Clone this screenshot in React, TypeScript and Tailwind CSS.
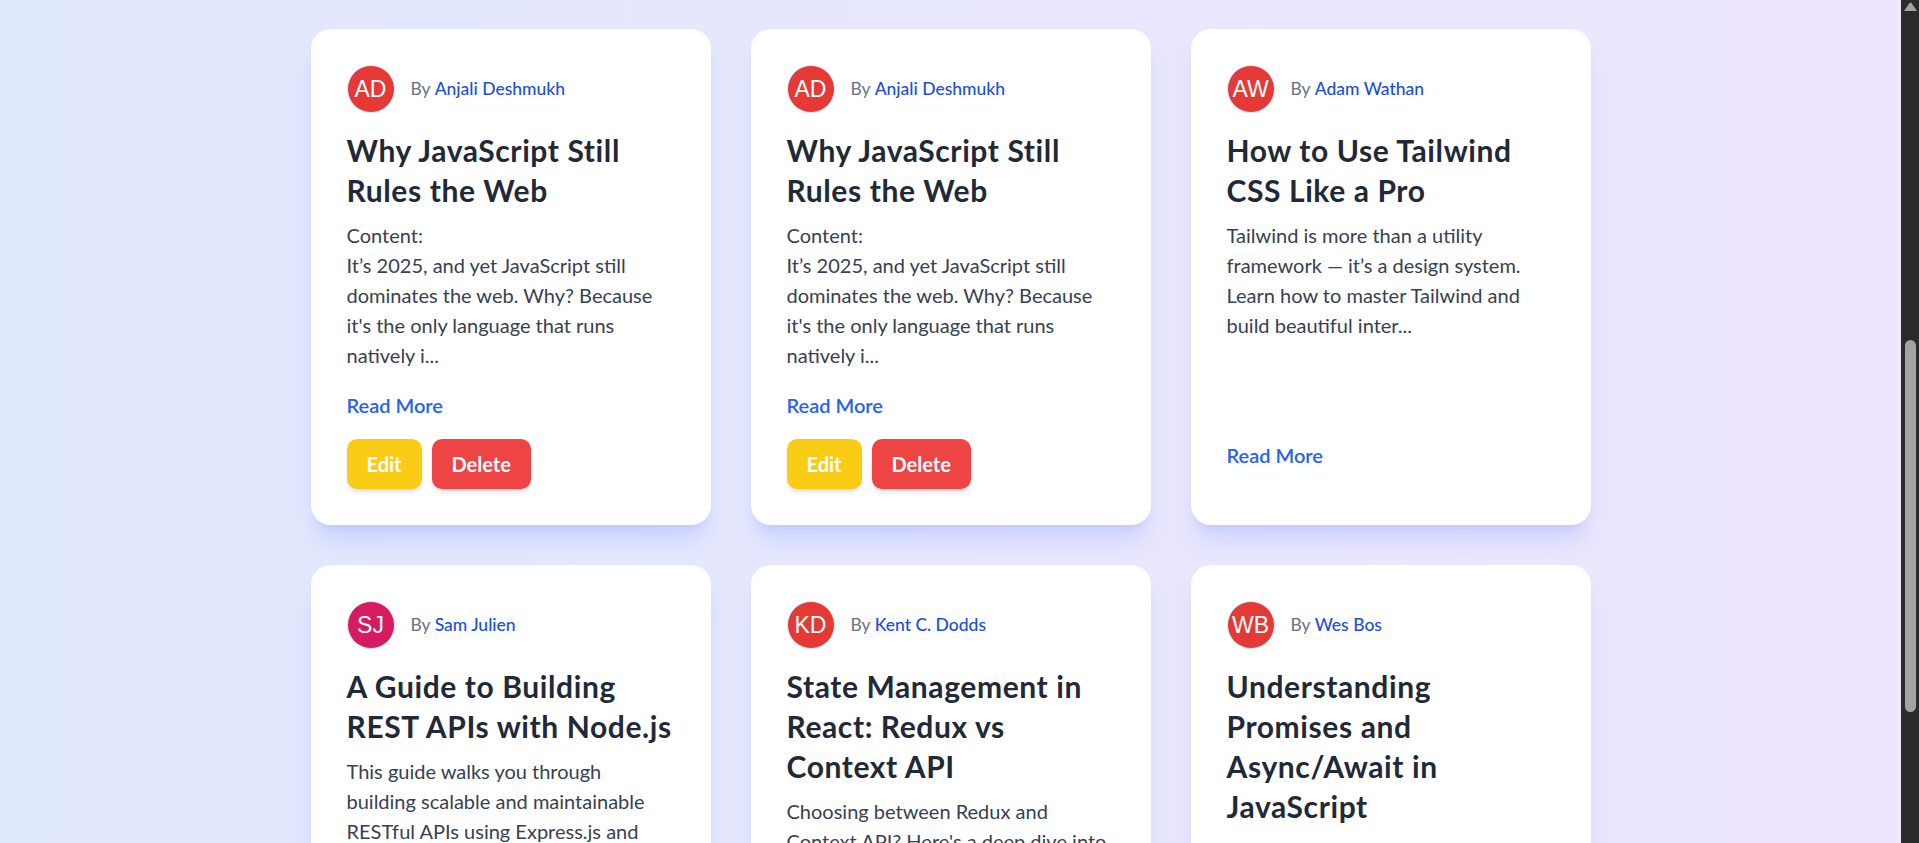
import React from 'react';

interface Post {
  id: number;
  initials: string;
  avatarBg: string;
  author: string;
  title: string;
  excerpt: string;
  mine: boolean;
}

const posts: Post[] = [
  {
    id: 1,
    initials: 'AD',
    avatarBg: 'bg-[#e53935]',
    author: 'Anjali Deshmukh',
    title: 'Why JavaScript Still Rules the Web',
    excerpt:
      "Content:\nIt’s 2025, and yet JavaScript still dominates the web. Why? Because it's the only language that runs natively i...",
    mine: true,
  },
  {
    id: 2,
    initials: 'AD',
    avatarBg: 'bg-[#e53935]',
    author: 'Anjali Deshmukh',
    title: 'Why JavaScript Still Rules the Web',
    excerpt:
      "Content:\nIt’s 2025, and yet JavaScript still dominates the web. Why? Because it's the only language that runs natively i...",
    mine: true,
  },
  {
    id: 3,
    initials: 'AW',
    avatarBg: 'bg-[#e53935]',
    author: 'Adam Wathan',
    title: 'How to Use Tailwind CSS Like a Pro',
    excerpt:
      'Tailwind is more than a utility framework — it’s a design system. Learn how to master Tailwind and build beautiful inter...',
    mine: false,
  },
  {
    id: 4,
    initials: 'SJ',
    avatarBg: 'bg-[#d81b60]',
    author: 'Sam Julien',
    title: 'A Guide to Building REST APIs with Node.js',
    excerpt:
      'This guide walks you through building scalable and maintainable RESTful APIs using Express.js and MongoDB, with best pra...',
    mine: false,
  },
  {
    id: 5,
    initials: 'KD',
    avatarBg: 'bg-[#e53935]',
    author: 'Kent C. Dodds',
    title: 'State Management in React: Redux vs Context API',
    excerpt:
      "Choosing between Redux and Context API? Here's a deep dive into when to use each, their trade-offs, and real-world exa...",
    mine: false,
  },
  {
    id: 6,
    initials: 'WB',
    avatarBg: 'bg-[#e53935]',
    author: 'Wes Bos',
    title: 'Understanding Promises and Async/Await in JavaScript',
    excerpt:
      "Promises and async/await make asynchronous JavaScript easier to read and write. Let's break down how they work under th...",
    mine: false,
  },
];

const BlogCard = ({ post }: { post: Post }) => {
  return (
    <div className="flex flex-col rounded-[20px] bg-white p-9 shadow-xl shadow-indigo-300/40">
      <div className="mb-[17px] flex items-center gap-4">
        <div
          className={`flex h-12 w-12 shrink-0 items-center justify-center rounded-full border border-blue-100 font-['Liberation_Sans',sans-serif] text-[23px] text-white ${post.avatarBg}`}
        >
          {post.initials}
        </div>
        <p className="text-[17.5px] text-[#6b7280]">
          By <span className="font-medium text-[#1d4ed8]">{post.author}</span>
        </p>
      </div>

      <h2 className="mb-[10px] text-[30px] font-bold leading-10 tracking-[0.6px] text-[#1f2937]">{post.title}</h2>
      <p className="whitespace-pre-line text-[20px] leading-[30px] text-[#374151]">{post.excerpt}</p>

      <div className="mt-auto pt-5">
        <a href="#" className="mb-[19px] block text-[20px] font-semibold leading-[30px] text-[#2563eb]">
          Read More
        </a>
        {post.mine && (
          <div className="flex gap-2.5">
            <button className="rounded-[10px] bg-[#facc15] px-5 py-2.5 text-[20px] font-bold leading-[30px] text-white shadow-md">
              Edit
            </button>
            <button className="rounded-[10px] bg-[#ef4444] px-5 py-2.5 text-[20px] font-bold leading-[30px] text-white shadow-md">
              Delete
            </button>
          </div>
        )}
      </div>
    </div>
  );
};

// window scrollbar as it appears in the screenshot (page scrolled part way down)
const Scrollbar = () => (
  <div className="flex h-screen w-[18px] shrink-0 flex-col items-center bg-[#2b2b2b]">
    <svg width="13" height="10" viewBox="0 0 13 10" className="mt-0.5">
      <path d="M5.5 1 Q6.5 0 7.5 1 L13 9 L0 9 Z" fill="#a3a3a3" />
    </svg>
    <div className="mt-[328px] h-[372px] w-[11px] rounded-full bg-[#a3a3a3]" />
  </div>
);

export default function App() {
  return (
    <div className="flex h-screen overflow-hidden font-['Lato',sans-serif]">
      <main className="h-screen flex-1 overflow-hidden bg-linear-to-r from-[#e0e8fd] to-[#eee6fe]">
        <div className="mx-auto max-w-[1280px] pb-20 pt-[29px]">
          <div className="grid grid-cols-3 gap-10">
            {posts.map((post) => (
              <BlogCard key={post.id} post={post} />
            ))}
          </div>
        </div>
      </main>
      <Scrollbar />
    </div>
  );
}
